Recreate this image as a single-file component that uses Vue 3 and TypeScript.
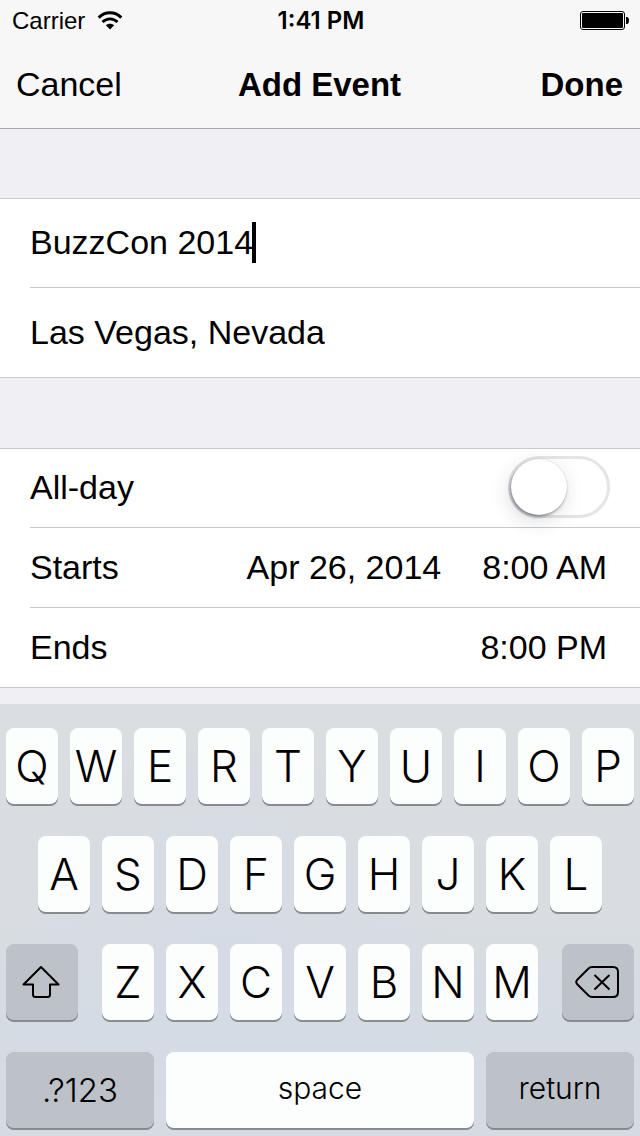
<script setup lang="ts">
import { ref } from 'vue'

const title = ref('BuzzCon 2014')
const place = ref('Las Vegas, Nevada')
const allDay = ref(false)

const topRow = [...'QWERTYUIOP']
const middleRow = [...'ASDFGHJKL']
const bottomRow = [...'ZXCVBNM']
</script>

<template>
  <div class="screen">
    <header class="header">
      <div class="status">
        <div class="carrier">
          <span>Carrier</span>
          <svg class="wifi" viewBox="0 0 26 20" aria-hidden="true">
            <path d="M1.7 6.600C8 0.2 18 0.2 24.3 6.600" fill="none" stroke="#000" stroke-width="3" />
            <path d="M5.500 11C10 6.700 16 6.700 20.5 11" fill="none" stroke="#000" stroke-width="2.800" />
            <path d="M8.9 14.2C11.2 12.2 14.8 12.2 17.1 14.2L13 18.6Z" />
          </svg>
        </div>
        <time class="clock">1:41 PM</time>
        <svg class="battery" viewBox="0 0 50 20" aria-hidden="true">
          <rect x="0.5" y="0.5" width="44" height="18" rx="2.5" fill="none" stroke="#000" />
          <rect x="2" y="2" width="41" height="15" rx="1" />
          <path d="M46 6h1.5q1.5 0.8 1.5 3.5t-1.5 3.5H46z" />
        </svg>
      </div>
      <nav class="nav">
        <button type="button" class="nav-button">Cancel</button>
        <h1 class="heading">Add Event</h1>
        <button type="button" class="nav-button done">Done</button>
      </nav>
    </header>

    <main class="form">
      <section class="group">
        <div class="row tall">
          <input v-model="title" class="field" type="text" aria-label="Title" />
          <span class="caret"></span>
        </div>
        <div class="row tall">
          <input v-model="place" class="field" type="text" aria-label="Location" />
        </div>
      </section>
      <section class="group">
        <div class="row">
          <label for="all-day">All-day</label>
          <input id="all-day" v-model="allDay" class="switch" type="checkbox" role="switch" />
        </div>
        <div class="row">
          <span>Starts</span>
          <button type="button" class="value">
            <span>Apr 26, 2014</span>
            <span>8:00 AM</span>
          </button>
        </div>
        <div class="row">
          <span>Ends</span>
          <button type="button" class="value">8:00 PM</button>
        </div>
      </section>
    </main>

    <section class="keyboard" aria-label="Keyboard">
      <div class="keys">
        <button v-for="k in topRow" :key="k" type="button" class="key">{{ k }}</button>
      </div>
      <div class="keys inset">
        <button v-for="k in middleRow" :key="k" type="button" class="key">{{ k }}</button>
      </div>
      <div class="third">
        <button type="button" class="key dark" aria-label="Shift">
          <svg class="shift" viewBox="0 0 40 34" aria-hidden="true">
            <path d="M19 2L36.500 19.5H28V29.5Q28 32 25.5 32H13.5Q11 32 11 29.5V19.5H1.500Z" />
          </svg>
        </button>
        <div class="keys">
          <button v-for="k in bottomRow" :key="k" type="button" class="key">{{ k }}</button>
        </div>
        <button type="button" class="key dark" aria-label="Delete">
          <svg class="delete" viewBox="0 0 46 34" aria-hidden="true">
            <path d="M17 2H38Q43 2 43 7V27Q43 32 38 32H17Q15 32 13.500 30.500L2 19Q0.500 17 2 15L13.500 3.500Q15 2 17 2Z" />
            <path d="M19.500 10L34.500 24.500M34.500 10L19.500 24.500" />
          </svg>
        </button>
      </div>
      <div class="fourth">
        <button type="button" class="key dark digits">.?123</button>
        <button type="button" class="key word">space</button>
        <button type="button" class="key dark word">return</button>
      </div>
    </section>
  </div>
</template>

<style>
body {
  margin: 0;
}
</style>

<style scoped>
.screen {
  display: flex;
  flex-direction: column;
  min-height: 100vh;
  background: #efeff4;
  color: #000;
  font-family: "Liberation Sans", Arial, sans-serif;
  font-size: 34px;
  line-height: 40px;
}

button,
input {
  margin: 0;
  padding: 0;
  border: 0;
  background: none;
  color: inherit;
  font: inherit;
  outline: none;
}

svg {
  display: block;
}

.header {
  background: #f7f7f7;
  border-bottom: 1px solid #a7a7ac;
}

.status {
  display: grid;
  grid-template-columns: 1fr auto 1fr;
  align-items: center;
  height: 40px;
  padding: 1px 10px 0 12px;
  font-size: 24px;
}

.carrier {
  display: flex;
  align-items: center;
  gap: 12px;
}

.wifi {
  width: 26px;
  height: 20px;
}

.clock {
  font-family: Inter, sans-serif;
  font-weight: 600;
  font-size: 24px;
}

.battery {
  width: 50px;
  height: 20px;
  justify-self: end;
}

.nav {
  display: grid;
  grid-template-columns: 1fr auto 1fr;
  align-items: baseline;
  height: 64px;
  padding: 23px 17px 0 16px;
}

.nav-button {
  justify-self: start;
}

.heading {
  margin: 0;
  font-size: 33px;
  font-weight: 700;
}

.done {
  justify-self: end;
  font-size: 33px;
  font-weight: 700;
}

.form {
  padding-bottom: 16px;
}

.group {
  margin-top: 69px;
  padding-left: 30px;
  background: #fff;
  border: solid #c8c7cc;
  border-width: 1px 0;
}

.group + .group {
  margin-top: 70px;
}

.row {
  display: flex;
  box-sizing: border-box;
  align-items: center;
  justify-content: space-between;
  height: 78px;
  padding: 0 33px 2px 0;
}

.row.tall {
  height: 88px;
  justify-content: flex-start;
}

.row + .row {
  height: 80px;
  border-top: 1px solid #c8c7cc;
}

.row.tall + .row.tall {
  height: 90px;
}

.field {
  field-sizing: content;
  max-width: 100%;
}

.caret {
  width: 4px;
  height: 41px;
  margin-left: -1px;
  background: #000;
}

.value {
  display: flex;
  gap: 41px;
}

.switch {
  appearance: none;
  box-sizing: border-box;
  width: 102px;
  height: 62px;
  margin-right: -3px;
  border: 3px solid #e5e5e5;
  border-radius: 31px;
  background: #fff;
}

.switch::before {
  content: "";
  display: block;
  width: 56px;
  height: 56px;
  border-radius: 50%;
  background: #fff;
  box-shadow: 0 0 1px rgba(70, 75, 90, 0.3), -1px 2px 3px rgba(40, 45, 65, 0.45), -2px 6px 20px rgba(40, 45, 65, 0.16);
}

.switch:checked {
  background: #4cd964;
  border-color: #4cd964;
}

.switch:checked::before {
  margin-left: auto;
}

.keyboard {
  display: flex;
  flex-direction: column;
  gap: 32px;
  margin-top: auto;
  padding: 24px 6px 8px;
  background:
    radial-gradient(circle at 35% 60%, rgba(211, 219, 231, 0.6), rgba(211, 219, 231, 0) 50%),
    linear-gradient(#dadde2, #d9dde1 45%, #d4dbe3 80%, #d6dae2);
}

.keys {
  display: flex;
  gap: 12px;
}

.inset {
  padding: 0 32px;
}

.third {
  display: grid;
  grid-template-columns: 72fr 436fr 72fr;
  gap: 24px;
}

.fourth {
  display: grid;
  grid-template-columns: 148fr 308fr 148fr;
  gap: 12px;
}

.key {
  display: flex;
  box-sizing: border-box;
  flex: 1 1 0;
  align-items: center;
  justify-content: center;
  min-width: 0;
  height: 76px;
  padding-bottom: 1px;
  border-radius: 8px;
  background: #fcfdfd;
  box-shadow: 0 2px 0 #878a8f;
  font-family: Inter, sans-serif;
  font-size: 44px;
  font-weight: 300;
}

.key.dark {
  background: #bdc1c8;
}

.key.digits {
  font-size: 33px;
}

.key.word {
  padding-bottom: 4px;
  font-size: 30px;
}

.shift,
.delete {
  fill: none;
  stroke: #000;
  stroke-width: 2;
  stroke-linejoin: round;
}

.shift {
  width: 40px;
  height: 34px;
}

.delete {
  width: 46px;
  height: 34px;
}
</style>
